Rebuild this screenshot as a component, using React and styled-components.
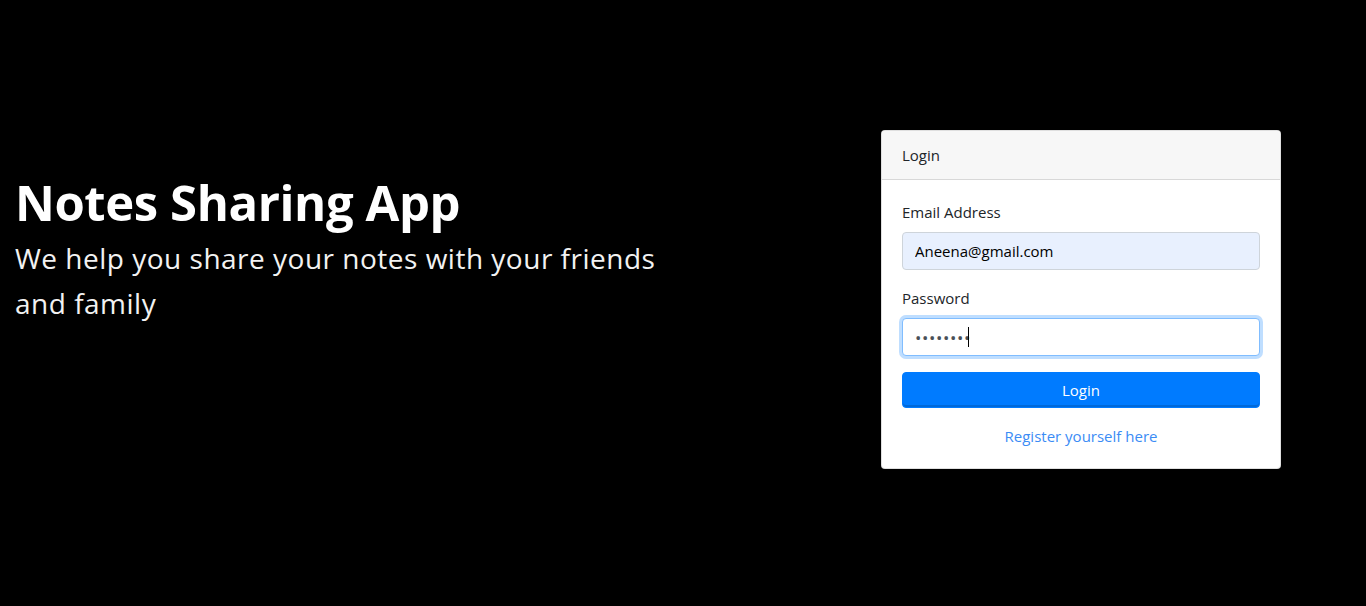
import React from "react";
import styled, { createGlobalStyle } from "styled-components";

const GlobalStyle = createGlobalStyle`
  html, body {
    margin: 0;
    padding: 0;
    background: #000;
    font-family: "Open Sans", "Noto Sans", sans-serif;
  }
  * { box-sizing: border-box; }
`;

const Page = styled.div`
  display: flex;
  align-items: flex-start;
  width: 1366px;
  height: 606px;
  background: #000;
`;

const Intro = styled.div`
  width: 683px;
  padding: 172px 15px 0 15px;
  color: #fff;
`;

const Title = styled.h1`
  margin: 0 0 4px 0;
  font-size: 49px;
  font-weight: 700;
  line-height: 60px;
  letter-spacing: -0.4px;
`;

const Tagline = styled.p`
  margin: 0;
  font-size: 28px;
  line-height: 45px;
  color: #f2f2f2;
  letter-spacing: 0.5px;
`;

const Side = styled.div`
  flex: 1;
  padding: 130px 0 0 198px;
`;

const Card = styled.div`
  width: 400px;
  background: #fff;
  border: 1px solid rgba(0, 0, 0, 0.125);
  border-radius: 4px;
  overflow: hidden;
  color: #212529;
`;

const CardHeader = styled.div`
  padding: 12px 20px;
  height: 49px;
  background: #f7f7f7;
  border-bottom: 1px solid rgba(0, 0, 0, 0.125);
  font-size: 15px;
  line-height: 24px;
`;

const CardBody = styled.div`
  padding: 22px 20px 22px 20px;
`;

const Field = styled.div`
  margin-bottom: ${(p) => p.$gap || 16}px;
`;

const Label = styled.label`
  display: block;
  font-size: 15px;
  line-height: 20px;
  margin-bottom: ${(p) => p.$gap || 9}px;
`;

const InputWrap = styled.div`
  position: relative;
`;

const Input = styled.input`
  display: block;
  width: 100%;
  height: 38px;
  padding: 6px 12px;
  font-family: inherit;
  font-size: 15px;
  background: ${(p) => (p.$autofill ? "#e8f0fe" : "#fff")};
  border: 1px solid ${(p) => (p.$focused ? "#80bdff" : "#ced4da")};
  border-radius: 4px;
  outline: none;
  box-shadow: ${(p) => (p.$focused ? "0 0 0 3px rgba(0, 123, 255, 0.25)" : "none")};
  color: ${(p) => (p.$autofill ? "#000" : "#495057")};
  letter-spacing: ${(p) => (p.type === "password" ? "0.6px" : "0")};
  &[type="password"] {
    font-size: 17px;
  }
`;

const Caret = styled.span`
  position: absolute;
  left: 66px;
  top: 9px;
  width: 1px;
  height: 20px;
  background: #000;
`;

const Button = styled.button`
  display: block;
  width: 100%;
  height: 36px;
  border: 1px solid #007bff;
  border-radius: 4px;
  background: #007bff;
  color: #fff;
  font-family: inherit;
  font-size: 15px;
  line-height: 22px;
  box-shadow: inset 0 -2px 0 #0069d9;
`;

const LinkRow = styled.div`
  text-align: center;
  margin-top: 18px;
  font-size: 15px;
  line-height: 20px;
`;

const Link = styled.a`
  color: #3b8cf5;
  text-decoration: none;
`;

export default function App() {
  return (
    <>
      <GlobalStyle />
      <Page>
        <Intro>
          <Title>Notes Sharing App</Title>
          <Tagline>We help you share your notes with your friends and family</Tagline>
        </Intro>
        <Side>
          <Card>
            <CardHeader>Login</CardHeader>
            <CardBody>
              <Field $gap={18}>
                <Label $gap={10}>Email Address</Label>
                <Input type="email" defaultValue="Aneena@gmail.com" $autofill readOnly />
              </Field>
              <Field $gap={16}>
                <Label $gap={10}>Password</Label>
                <InputWrap>
                  <Input type="password" defaultValue="aneena12" $focused readOnly />
                  <Caret />
                </InputWrap>
              </Field>
              <Button type="button">Login</Button>
              <LinkRow>
                <Link href="#">Register yourself here</Link>
              </LinkRow>
            </CardBody>
          </Card>
        </Side>
      </Page>
    </>
  );
}
